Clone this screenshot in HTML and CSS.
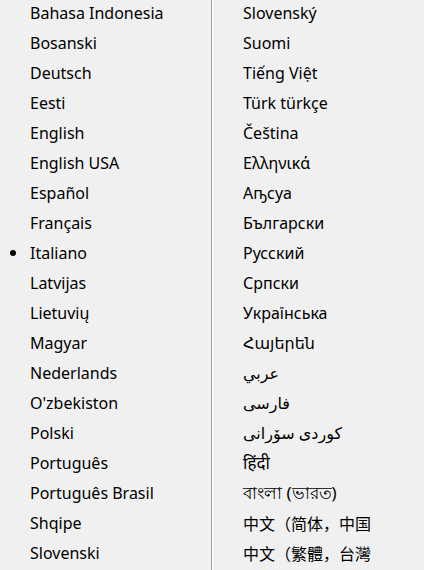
FILE: index.html
```html
<!DOCTYPE html>
<html lang="en">

<head>
  <meta charset="UTF-8" />
  <meta name="viewport" content="width=device-width, initial-scale=1.0" />
  <title>Language</title>
  <link rel="stylesheet" href="styles.css">
</head>

<body>

  <div class="langs">
    <ul class="col left">
      <li>Bahasa Indonesia</li>
      <li>Bosanski</li>
      <li>Deutsch</li>
      <li>Eesti</li>
      <li>English</li>
      <li>English USA</li>
      <li>Español</li>
      <li>Français</li>
      <li class="current">Italiano</li>
      <li>Latvijas</li>
      <li>Lietuvių</li>
      <li>Magyar</li>
      <li>Nederlands</li>
      <li>O'zbekiston</li>
      <li>Polski</li>
      <li>Português</li>
      <li>Português Brasil</li>
      <li>Shqipe</li>
      <li>Slovenski</li>
    </ul>

    <div class="sep"></div>

    <ul class="col right">
      <li>Slovenský</li>
      <li>Suomi</li>
      <li>Tiếng Việt</li>
      <li>Türk türkçe</li>
      <li>Čeština</li>
      <li>Ελληνικά</li>
      <li>Аҧсуа</li>
      <li>Български</li>
      <li>Русский</li>
      <li>Српски</li>
      <li>Українська</li>
      <li>Հայերեն</li>
      <li><span dir="rtl">عربي</span></li>
      <li><span dir="rtl">فارسی</span></li>
      <li><span dir="rtl">کوردی سۆرانی</span></li>
      <li class="indic">हिंदी</li>
      <li class="indic">বাংলা (ভারত)</li>
      <li class="cjk">中文（简体，中国</li>
      <li class="cjk">中文（繁體，台灣</li>
    </ul>
  </div>

</body>

</html>
```

FILE: styles.css
```css
body {
  margin: 0;
  background-color: #f0f0f0;
  color: #000;
  font-family: "Noto Sans", "DejaVu Sans", sans-serif;
  font-size: 16px;
}

.langs {
  display: flex;
  height: 570px;
  overflow: hidden;
}

.col {
  list-style: none;
  margin: 0;
  padding: 0;
}

.left {
  width: 211px;
}

.right {
  flex: 1;
}

.col li {
  height: 30px;
  line-height: 26px;
  padding-left: 30px;
  white-space: nowrap;
  position: relative;
}

.current::before {
  content: "";
  position: absolute;
  left: 10px;
  top: 10px;
  width: 6px;
  height: 6px;
  border-radius: 50%;
  background-color: #000;
}

.sep {
  width: 1px;
  border-left: 1px solid #a0a0a0;
  background-color: #fff;
}

.indic {
  font-size: 17px;
}

.cjk {
  font-family: "Noto Sans CJK SC", sans-serif;
}
```
